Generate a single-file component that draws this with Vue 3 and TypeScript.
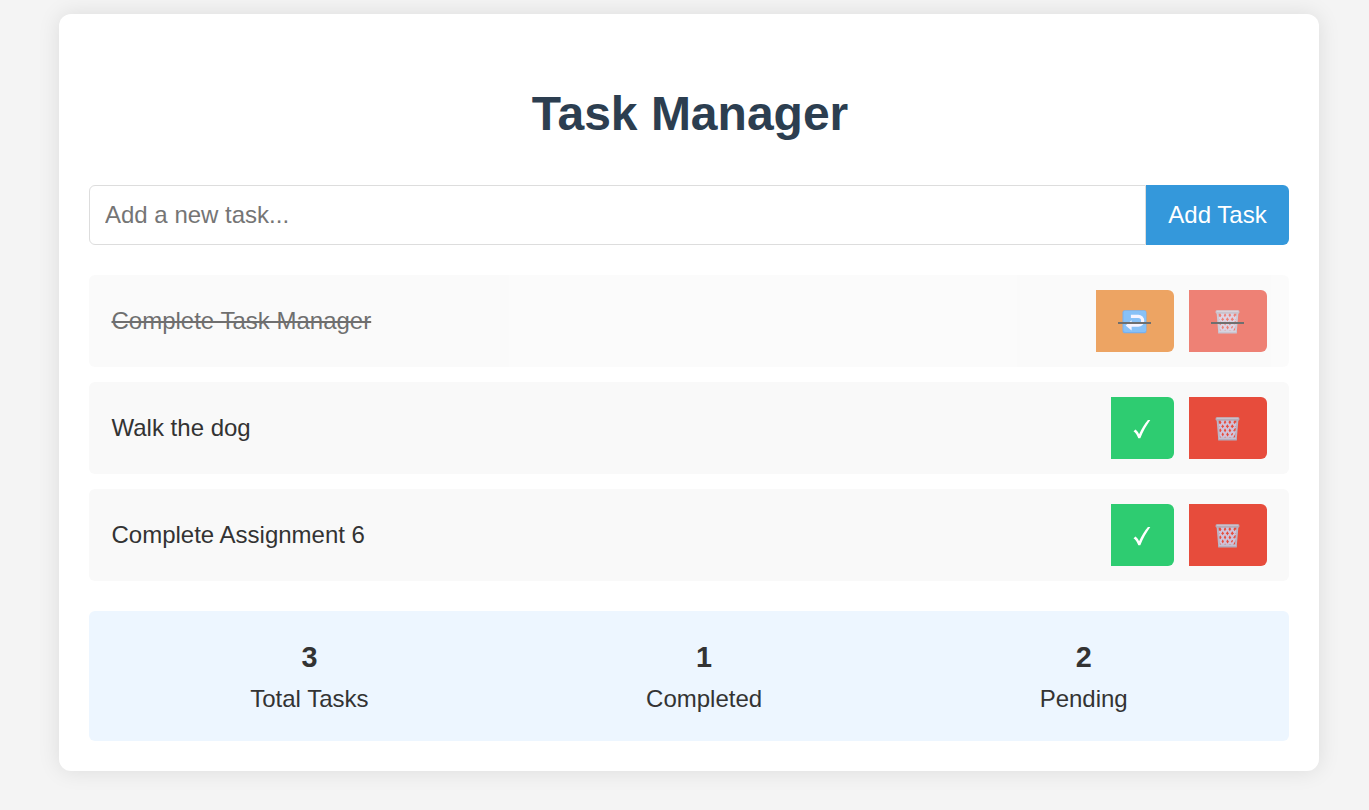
<script setup lang="ts">
import { computed, ref } from 'vue'

interface Task {
  id: number
  text: string
  completed: boolean
}

const newTask = ref('')
const tasks = ref<Task[]>([
  { id: 1, text: 'Complete Task Manager', completed: true },
  { id: 2, text: 'Walk the dog', completed: false },
  { id: 3, text: 'Complete Assignment 6', completed: false },
])

const stats = computed(() => {
  const done = tasks.value.filter((t) => t.completed).length
  return [
    { label: 'Total Tasks', value: tasks.value.length },
    { label: 'Completed', value: done },
    { label: 'Pending', value: tasks.value.length - done },
  ]
})

function addTask() {
  const text = newTask.value.trim()
  if (!text) return
  tasks.value.push({ id: Date.now(), text, completed: false })
  newTask.value = ''
}

function removeTask(id: number) {
  tasks.value = tasks.value.filter((t) => t.id !== id)
}
</script>

<template>
  <div class="page">
    <main class="card">
      <h1 class="title">Task Manager</h1>

      <form class="entry" @submit.prevent="addTask">
        <input v-model="newTask" class="field" type="text" placeholder="Add a new task..." />
        <button class="btn add" type="submit">Add Task</button>
      </form>

      <ul class="list">
        <li v-for="task in tasks" :key="task.id" class="row" :class="{ completed: task.completed }">
          <span class="label">{{ task.text }}</span>
          <div class="actions">
            <button
              class="btn"
              :class="task.completed ? 'undo' : 'done'"
              :aria-label="task.completed ? 'Undo' : 'Complete'"
              @click="task.completed = !task.completed"
            >
              <svg v-if="task.completed" class="icon" viewBox="0 0 33 28">
                <rect x="4.5" y="1.2" width="24" height="23" rx="2.2" fill="#3f8fe6" />
                <rect x="5.5" y="1.7" width="22.5" height="21.3" rx="1.8" fill="#56a8f5" />
                <path d="M12.9 7.4H20.3a4.4 4.4 0 0 1 0 8.8H13" fill="none" stroke="#f4f0ff" stroke-width="3.2" />
                <path d="M7.6 16.4l6-5.2v10.4z" fill="#f4f0ff" />
              </svg>
              <svg v-else class="icon check" viewBox="0 0 18 28">
                <path
                  d="M.5 15.2L2.6 13.5Q4.6 15.2 6.1 18.2C8.6 12.6 11.7 7.8 14.9 4L17.3 4C13.4 9.4 10 15.2 7.3 22.2L5.3 22.2C4 19 2.6 16.6 .5 15.2Z"
                  fill="#fff"
                />
              </svg>
            </button>
            <button class="btn delete" aria-label="Delete" @click="removeTask(task.id)">
              <svg class="icon" viewBox="0 0 33 28">
                <path
                  d="M10.2 4L21 22M15.2 4l8 14M20 4l4.8 8M8 8l8.2 14M8 16l3.5 6M13 4L7.8 13M17.5 4L8.5 20M22.5 4L12 22M25.5 7L17 22M24.8 15l-4 7"
                  fill="none"
                  stroke="#d0c3da"
                  stroke-width="2"
                />
                <path d="M6.6 4L8.2 23M26.4 4L24.8 23" stroke="#bcb4c4" stroke-width="2" />
                <rect x="4.6" y="1.2" width="23.8" height="3.5" rx="1.4" fill="#b5abb8" />
                <path d="M5.7 2.2h21.6" stroke="#d3cbd6" stroke-width="1" />
                <rect x="7.1" y="21.6" width="18.8" height="2.9" rx=".6" fill="#b3adc0" />
                <path d="M8 22.2h17" stroke="#d2cedb" stroke-width=".9" />
              </svg>
            </button>
          </div>
        </li>
      </ul>

      <section class="stats">
        <div v-for="stat in stats" :key="stat.label" class="stat">
          <strong class="value">{{ stat.value }}</strong>
          <span>{{ stat.label }}</span>
        </div>
      </section>
    </main>
  </div>
</template>

<style>
body {
  background: #f4f4f4;
}
</style>

<style scoped>
.page {
  box-sizing: border-box;
  height: 810px;
  padding: 14px 50px 0 59px;
  background: #f4f4f4;
}

.card {
  box-sizing: border-box;
  width: 1260px;
  height: 757px;
  padding: 63px 30px 30px;
  border-radius: 12px;
  background: #fff;
  box-shadow: 0 0 22.5px rgba(0, 0, 0, 0.1);
  color: #333;
  font-family: 'Liberation Sans', Arial, sans-serif;
  font-size: 24px;
  line-height: 36px;
}

.title {
  margin: 0 0 35px;
  padding: 1px 0 0 2px;
  color: #2c3e50;
  font-size: 48px;
  line-height: 72px;
  text-align: center;
}

.entry {
  display: flex;
  height: 60px;
  margin-bottom: 30px;
}

.field {
  flex: 1;
  box-sizing: border-box;
  min-width: 0;
  padding: 0 15px;
  border: 1px solid #ddd;
  border-radius: 6px 0 0 6px;
  outline: none;
  background: #fff;
  color: #333;
  font: inherit;
}

.field::placeholder {
  color: #757575;
}

.btn {
  display: flex;
  align-items: center;
  justify-content: center;
  box-sizing: border-box;
  padding: 0 22.5px;
  border: 0;
  border-radius: 0 6px 6px 0;
  color: #fff;
  font: inherit;
  cursor: pointer;
}

.add {
  width: 143px;
  padding: 0;
  background: #3498db;
  white-space: nowrap;
}

.list {
  display: flex;
  flex-direction: column;
  gap: 15px;
  margin: 0 0 30px;
  padding: 0;
  list-style: none;
}

.row {
  display: flex;
  align-items: center;
  justify-content: space-between;
  box-sizing: border-box;
  height: 92px;
  padding: 0 22.5px;
  border-radius: 6px;
  background: #f9f9f9;
}

.completed {
  opacity: 0.7;
}

.completed .label {
  text-decoration: line-through;
  text-decoration-thickness: 2px;
}

.actions {
  display: flex;
  gap: 15px;
}

.actions .btn {
  position: relative;
  width: 78px;
  height: 62px;
}

.actions .done {
  width: 63px;
  background: #2ecc71;
}

.undo {
  background: #e67e22;
}

.delete {
  background: #e74c3c;
}

.completed .btn::after {
  content: '';
  position: absolute;
  top: 32px;
  left: 22px;
  width: 33px;
  height: 2px;
  background: #333;
}

.icon {
  flex: none;
  width: 33px;
  height: 28px;
  margin-top: 4px;
}

.check {
  width: 18px;
}

.stats {
  display: flex;
  justify-content: space-around;
  box-sizing: border-box;
  height: 130px;
  padding: 22.5px;
  border-radius: 6px;
  background: #edf6ff;
}

.stat {
  display: flex;
  flex-direction: column;
  align-items: center;
}

.value {
  font-size: 28.8px;
  line-height: 46px;
  margin-bottom: 1px;
}
</style>
